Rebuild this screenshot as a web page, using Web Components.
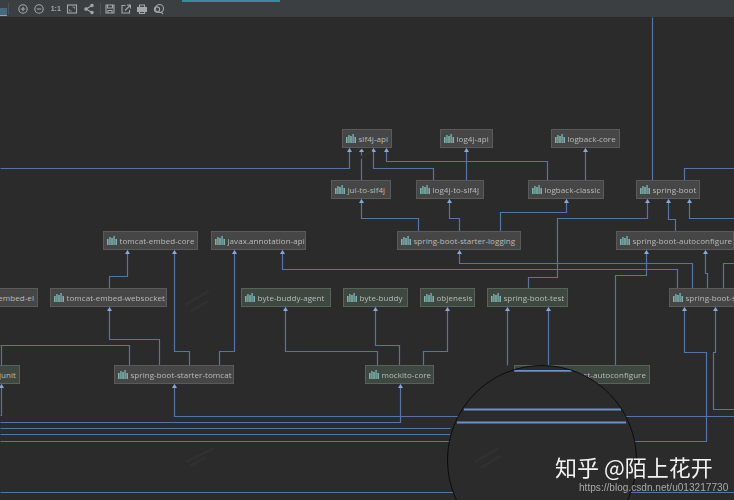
<!DOCTYPE html>
<html>
<head>
<meta charset="utf-8">
<style>
  html, body { margin: 0; height: 100%; background: #2b2b2b; overflow: hidden; }
  body { display: flex; flex-direction: column; width: 734px; height: 500px; font-family: "Open Sans", sans-serif; }
</style>
</head>
<body>
<graph-toolbar></graph-toolbar>
<dep-graph>
  <dep-node x="342" y="129" w="50" name="slf4j-api"></dep-node>
  <dep-node x="440" y="129" w="53" name="log4j-api"></dep-node>
  <dep-node x="551" y="129" w="69" name="logback-core"></dep-node>
  <dep-node x="331" y="180" w="60" name="jul-to-slf4j"></dep-node>
  <dep-node x="416" y="180" w="68" name="log4j-to-slf4j"></dep-node>
  <dep-node x="528" y="180" w="76" name="logback-classic"></dep-node>
  <dep-node x="636" y="180" w="64" name="spring-boot"></dep-node>
  <dep-node x="397" y="231" w="124" name="spring-boot-starter-logging"></dep-node>
  <dep-node x="616" y="231" w="118" name="spring-boot-autoconfigure"></dep-node>
  <dep-node x="103" y="231" w="95" name="tomcat-embed-core"></dep-node>
  <dep-node x="211" y="231" w="95" name="javax.annotation-api"></dep-node>
  <dep-node x="-70" y="288" w="108" name="tomcat-embed-el" end></dep-node>
  <dep-node x="50" y="288" w="117" name="tomcat-embed-websocket"></dep-node>
  <dep-node x="241" y="288" w="90" name="byte-buddy-agent" test></dep-node>
  <dep-node x="343" y="288" w="65" name="byte-buddy" test></dep-node>
  <dep-node x="420" y="288" w="55" name="objenesis" test></dep-node>
  <dep-node x="487" y="288" w="81" name="spring-boot-test" test></dep-node>
  <dep-node x="669" y="288" w="120" name="spring-boot-starter-json"></dep-node>
  <dep-node x="-40" y="365" w="60" name="junit" end test></dep-node>
  <dep-node x="114" y="365" w="120" name="spring-boot-starter-tomcat"></dep-node>
  <dep-node x="365" y="365" w="69" name="mockito-core" test></dep-node>
  <dep-node x="514" y="365" w="136" name="spring-boot-test-autoconfigure" end test></dep-node>
</dep-graph>

<script>
// edges run from the dependent node up to the dependency, the arrow sits on the last point
const EDGES = [
  [[0,168],[349,168],[349,148]],
  [[361,180],[361,148]],
  [[433,180],[433,168],[373,168],[373,148]],
  [[547,180],[547,161],[386,161],[386,148]],
  [[466,180],[466,148]],
  [[585,180],[585,148]],
  [[418,231],[418,218],[361,218],[361,199]],
  [[459,231],[459,218],[449,218],[449,199]],
  [[500,231],[500,212],[566,212],[566,199]],
  [[528,288],[528,277],[557,277],[557,218],[647,218],[647,199]],
  [[652,180],[652,17]],
  [[684,180],[684,168],[734,168]],
  [[675,231],[675,219],[668,219],[668,199]],
  [[734,218],[689,218],[689,199]],
  [[692,288],[692,263],[459,263],[459,250]],
  [[677,288],[677,269],[282,269],[282,250]],
  [[109,288],[109,276],[127,276],[127,250]],
  [[189,365],[189,351],[174,351],[174,250]],
  [[219,365],[219,351],[234,351],[234,250]],
  [[159,365],[159,339],[109,339],[109,307]],
  [[129,365],[129,345],[0,345]],
  [[1,345],[1,365]],
  [[0,415],[1,415],[1,384]],
  [[734,416],[174,416],[174,384]],
  [[0,422],[400,422],[400,384]],
  [[0,428],[450,428]],
  [[0,434],[450,434]],
  [[0,441],[706,441],[706,352],[684,352],[684,307]],
  [[734,409],[713,409],[713,352],[715,352],[715,307]],
  [[0,492],[734,492]],
  [[377,365],[377,351],[285,351],[285,307]],
  [[399,365],[399,345],[375,345],[375,307]],
  [[423,365],[423,351],[447,351],[447,307]],
  [[507,365],[507,307]],
  [[548,365],[548,307]],
  [[615,365],[615,275],[646,275],[646,250]],
  [[707,288],[707,273],[705,273],[705,250]],
  [[723,288],[723,263],[734,263]],
];
const NO_ARROW = new Set([10, 11, 20, 21, 25, 26, 29, 37]);

class GraphToolbar extends HTMLElement {
  constructor() {
    super();
    this.attachShadow({ mode: 'open' });
  }
  connectedCallback() {
    const s = 'fill="none" stroke="#a3a7a9" stroke-width="1.1"';
    this.shadowRoot.innerHTML = `
      <style>
        :host { display: flex; align-items: center; height: 17px; flex: none; background: #3c3f41; position: relative; }
        .mark { position: absolute; left: 182px; top: 0; width: 98px; height: 1.5px; background: #3a8a9a; }
        .logo { width: 7px; height: 7px; margin: 6px 1px 0 0; background: #46697d; border-bottom: 1px solid #8fa2ad; }
        .sep { width: 1px; height: 12px; background: #4d5155; }
        .tools { display: flex; align-items: center; gap: 4.4px; margin-left: 8px; filter: blur(.3px); }
        .tools.b { margin-left: 3px; }
        svg { width: 12px; height: 12px; display: block; }
        .one { width: 12px; text-align: center; font: bold 7px "Liberation Sans", sans-serif; color: #a3a7a9; }
      </style>
      <div class="mark"></div>
      <div class="logo"></div>
      <div class="sep"></div>
      <div class="tools">
        <svg viewBox="0 0 12 12" ${s}><circle cx="6" cy="6" r="4.2"/><path d="M3.8 6h4.4M6 3.8v4.4"/></svg>
        <svg viewBox="0 0 12 12" ${s}><circle cx="6" cy="6" r="4.2"/><path d="M3.8 6h4.4"/></svg>
        <div class="one">1:1</div>
        <svg viewBox="0 0 12 12" ${s}><rect x="1.5" y="2" width="9" height="8"/><path d="M6.5 4h2v1.6M5.5 8h-2V6.4" stroke-width=".8"/></svg>
        <svg viewBox="0 0 12 12" ${s}><path d="M9 2.5 3 6l6 3.5"/><circle cx="3" cy="6" r="1.2" fill="#a3a7a9"/><circle cx="9" cy="2.5" r="1.2" fill="#a3a7a9"/><circle cx="9" cy="9.5" r="1.2" fill="#a3a7a9"/></svg>
      </div>
      <div class="sep" style="margin-left:5px"></div>
      <div class="tools b">
        <svg viewBox="0 0 12 12" ${s}><path d="M2 2h8v8H2z"/><path d="M3.5 2v3h5V2M4 10V7.5h4V10"/></svg>
        <svg viewBox="0 0 12 12" ${s}><path d="M5.5 2.5H2v7.5h7.5V7"/><path d="M5 7.5 10 2.5M7 2h3.4v3.4"/></svg>
        <svg viewBox="0 0 12 12" ${s}><path d="M3.5 4.5V2h5v2.5"/><rect x="1.5" y="4.5" width="9" height="4" fill="#a3a7a9"/><path d="M3.5 8v2.5h5V8"/></svg>
        <svg viewBox="0 0 12 12" ${s}><circle cx="6.5" cy="5.5" r="4"/><circle cx="4" cy="6.5" r="2.6"/><path d="M8 9l2 2"/></svg>
      </div>`;
  }
}

class DepNode extends HTMLElement {
  constructor() {
    super();
    this.attachShadow({ mode: 'open' });
  }
  connectedCallback() {
    const test = this.hasAttribute('test');
    const end = this.hasAttribute('end');
    const bars = [[0, 3, '#7fb0a8'], [2.1, 1, '#6fa5a5'], [4.2, 2, '#83b39a'], [6.3, 0, '#6e9fb0'], [8.4, 3, '#7fb0a8']];
    this.shadowRoot.innerHTML = `
      <style>
        :host {
          position: absolute;
          left: ${this.getAttribute('x')}px;
          top: ${this.getAttribute('y')}px;
          width: ${this.getAttribute('w')}px;
          height: 19px;
          box-sizing: border-box;
          display: flex;
          align-items: center;
          justify-content: ${end ? 'flex-end' : 'flex-start'};
          gap: 2.5px;
          padding: 0 3px;
          background: ${test ? '#3e4840' : '#464646'};
          border: 1px solid ${test ? '#57625a' : '#5a5a5a'};
          font: 8px "Open Sans", sans-serif;
          letter-spacing: .06px;
          color: #b8bcb8;
          white-space: nowrap;
        }
        svg { width: 10px; height: 9px; flex: none; display: block; }
      </style>
      <svg viewBox="0 0 10 9">${bars.map(b => `<rect x="${b[0]}" y="${b[1]}" width="1.6" height="${9 - b[1]}" fill="${b[2]}"/>`).join('')}</svg>
      <span>${this.getAttribute('name')}</span>`;
  }
}

class MagnifierLens extends HTMLElement {
  constructor() {
    super();
    this.attachShadow({ mode: 'open' });
  }
  connectedCallback() {
    this.shadowRoot.innerHTML = `
      <style>
        :host {
          position: absolute;
          left: 447px;
          top: 365px;
          width: 190px;
          height: 190px;
          box-sizing: border-box;
          border: 1.4px solid #0c0c0c;
          border-radius: 50%;
          background: #2b2b2b;
          overflow: hidden;
        }
        svg { display: block; width: 100%; height: 100%; }
      </style>
      <svg viewBox="447 365 190 190">
        <path d="M514 370h58" stroke="#6a90cc" stroke-width="1.8"/>
        <path d="M463 409h159" stroke="#6a90cc" stroke-width="2"/>
        <path d="M456 422h171" stroke="#6a90cc" stroke-width="2"/>
        <path d="M474 462l24-14M480 468l20-12" stroke="#303030" stroke-width="3" fill="none"/>
      </svg>`;
  }
}

class DepGraph extends HTMLElement {
  constructor() {
    super();
    this.attachShadow({ mode: 'open' });
  }
  connectedCallback() {
    const lines = EDGES.map(pts => `<polyline points="${pts.map(p => (p[0] + .5) + ',' + (p[1] + .5)).join(' ')}"/>`).join('');
    const arrows = EDGES.filter((_, i) => !NO_ARROW.has(i)).map(pts => {
      const [x, y] = pts[pts.length - 1];
      return `<path d="M${x + .5} ${y}l2.5 4h-5z"/>`;
    }).join('');
    this.shadowRoot.innerHTML = `
      <style>
        :host { display: block; flex: 1; position: relative; overflow: hidden; }
        /* page coordinates: the canvas starts under the toolbar */
        .canvas { position: absolute; left: 0; top: -17px; width: 734px; height: 500px; filter: blur(.35px); }
        .edges { position: absolute; left: 0; top: 0; }
        .edges polyline { fill: none; stroke: #5575aa; stroke-width: 1.2; }
        .edges .heads path { fill: #86a9dc; }
        .smudge { position: absolute; left: 0; top: 0; }
        .sign {
          position: absolute;
          left: 555px;
          top: 451px;
          color: #f2f2f2;
          font: 22px "Noto Sans CJK SC", sans-serif;
          line-height: 30px;
          white-space: nowrap;
        }
        .url {
          position: absolute;
          left: 579px;
          top: 482px;
          font: 10.1px "Liberation Sans", sans-serif;
          color: #a9a9a9;
          white-space: nowrap;
        }
      </style>
      <div class="canvas">
        <svg class="edges" width="734" height="500">${lines}<g class="heads">${arrows}</g></svg>
        <svg class="smudge" width="734" height="500" fill="none" stroke="#303030" stroke-width="3">
          <path d="M185 305l24-14M190 312l18-11M186 462l28-14M190 466l16-9M354 152l20-12M360 158l12-7"/>
        </svg>
        <slot></slot>
        <magnifier-lens></magnifier-lens>
        <div class="sign">知乎 @陌上花开</div>
        <div class="url">https://blog.csdn.net/u013217730</div>
      </div>`;
  }
}

customElements.define('magnifier-lens', MagnifierLens);
customElements.define('graph-toolbar', GraphToolbar);
customElements.define('dep-node', DepNode);
customElements.define('dep-graph', DepGraph);
</script>
</body>
</html>
